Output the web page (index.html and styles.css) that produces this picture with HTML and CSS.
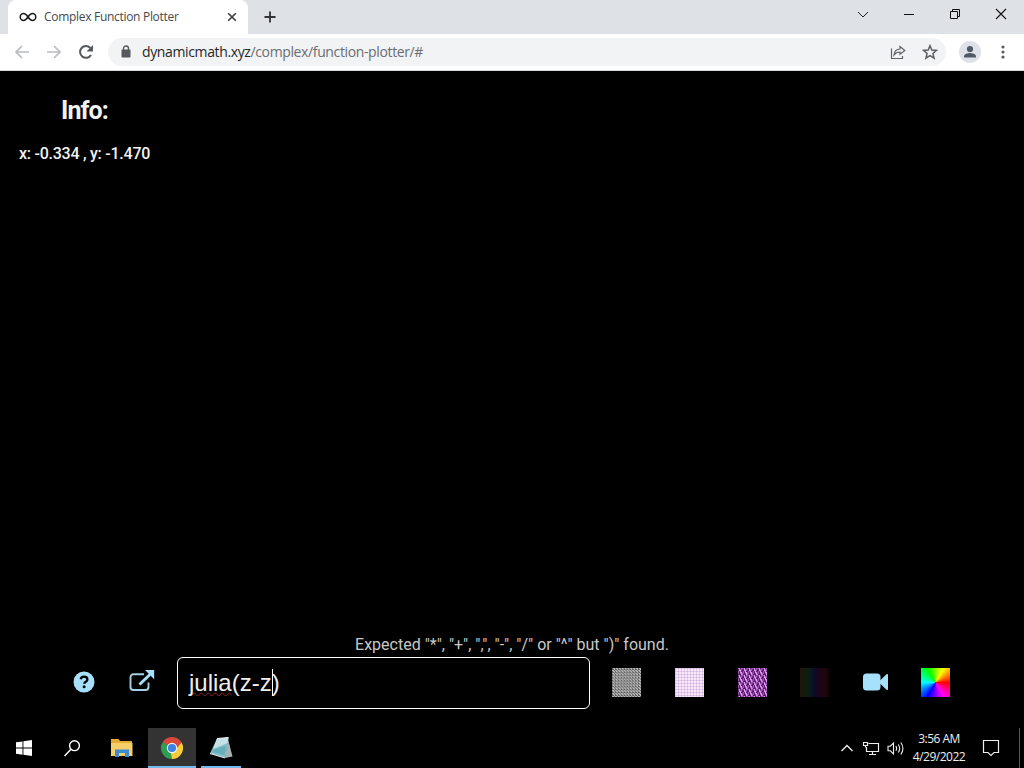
FILE: index.html
```
<!DOCTYPE html>
<html lang="en">
<head>
    <meta charset="UTF-8">
    <meta name="viewport" content="width=device-width, initial-scale=1.0">
    <title>Complex Function Plotter</title>
    <link rel="stylesheet" href="styles.css">
</head>
<body>
    <div class="screen">
        <header class="tab-strip">
            <div class="tab">
                <svg class="favicon" width="18" height="10" viewBox="0 0 18 10"><path d="M9 5C7.4 2.7 6.2 1.6 4.6 1.6a3.4 3.4 0 0 0 0 6.8C6.2 8.4 7.4 7.3 9 5s2.8-3.4 4.4-3.4a3.4 3.4 0 0 1 0 6.8C11.800 8.400 10.600 7.300 9 5z" fill="none" stroke="#1b1b1b" stroke-width="1.5"/></svg>
                <span class="tab-title">Complex Function Plotter</span>
                <svg class="tab-close" width="10" height="10" viewBox="0 0 10 10"><path d="M1.200 1.200l7.600 7.600M8.800 1.200l-7.600 7.600" stroke="#3c4043" stroke-width="1.6"/></svg>
            </div>
            <svg class="new-tab" width="14" height="14" viewBox="0 0 14 14"><path d="M7 1.500v11M1.500 7h11" stroke="#303236" stroke-width="1.8"/></svg>
            <div class="window-buttons">
                <svg width="46" height="30" viewBox="0 0 46 30"><path d="M18 12l5 5 5-5" fill="none" stroke="#222"/></svg>
                <svg width="46" height="30" viewBox="0 0 46 30"><path d="M18 14.500h10" stroke="#111"/></svg>
                <svg width="46" height="30" viewBox="0 0 46 30"><path d="M18.500 11.500h7v7h-7zM20.500 11.500v-2h7v7h-2" fill="none" stroke="#111"/></svg>
                <svg width="46" height="30" viewBox="0 0 46 30"><path d="M18 9l10 10M28 9L18 19" stroke="#111" stroke-width="1.1"/></svg>
            </div>
        </header>

        <nav class="toolbar">
            <svg width="16" height="16" viewBox="0 0 16 16"><path d="M15 8H2M8 2L2 8l6 6" fill="none" stroke="#b9bbbe" stroke-width="1.7"/></svg>
            <svg width="16" height="16" viewBox="0 0 16 16"><path d="M1 8h13M8 2l6 6-6 6" fill="none" stroke="#b9bbbe" stroke-width="1.7"/></svg>
            <svg width="16" height="16" viewBox="0 0 16 16"><path d="M13 11a5.900 5.900 0 1 1-.7-7.100L14 5.500" fill="none" stroke="#55585c" stroke-width="2"/><path d="M15 1v6.500H8.500z" fill="#55585c"/></svg>
            <div class="address-bar">
                <svg class="lock" width="10" height="13" viewBox="0 0 10 13"><path d="M2.500 6V3.500a2.500 2.500 0 0 1 5 0V6" fill="none" stroke="#55585c" stroke-width="1.400"/><rect x="0.500" y="4.600" width="9" height="7.800" rx="1" fill="#55585c"/></svg>
                <span class="url"><b>dynamicmath.xyz</b>/complex/function-plotter/#</span>
                <svg class="share" width="16" height="16" viewBox="0 0 16 16"><path d="M1.500 4.500v10h11V12M4 11c.4-4 2.500-5.800 6-6V2.500L14.800 6.500 10 10.200V8C7.200 8 5.500 8.900 4 11z" fill="none" stroke="#5f6368" stroke-width="1.200"/></svg>
                <svg width="16" height="16" viewBox="0 0 16 16"><path d="M8 1.700l1.850 4.300 4.650.4-3.550 3.100 1.100 4.600L8 11.650 3.950 14.100l1.100-4.600L1.500 6.400l4.650-.4z" fill="none" stroke="#5a5d61" stroke-width="1.500"/></svg>
            </div>
            <svg class="profile" width="22" height="22" viewBox="0 0 22 22"><circle cx="11" cy="11" r="11" fill="#dee2e8"/><circle cx="11" cy="8" r="3.100" fill="#505a66"/><path d="M5 16.500v-1.300c0-2.200 4-3.200 6-3.200s6 1 6 3.200v1.300z" fill="#505a66"/></svg>
            <svg class="menu" width="4" height="16" viewBox="0 0 4 16"><g fill="#5a5d61"><circle cx="2" cy="3" r="1.600"/><circle cx="2" cy="8" r="1.600"/><circle cx="2" cy="13" r="1.600"/></g></svg>
        </nav>

        <main class="plotter">
            <section class="info">
                <h1>Info:</h1>
                <p>x: -0.334 , y: -1.470</p>
            </section>
            <p class="message">Expected "*", "+", ",", "-", "/" or "^" but ")" found.</p>
            <div class="controls">
                <svg class="help" width="22" height="22" viewBox="0 0 22 22"><circle cx="11" cy="11" r="10.500" fill="#a6e0fb"/><path d="M7.700 8.300C8 6.500 9.300 5.700 11 5.700c2 0 3.400 1.200 3.400 2.700 0 2.300-3.200 2.300-3.200 4.400" fill="none" stroke="#000" stroke-width="2.300"/><circle cx="11.100" cy="15.800" r="1.500"/></svg>
                <svg class="open" width="26" height="24" viewBox="0 0 26 24"><path d="M15 5.300H4.500a3 3 0 0 0-3 3V18a3 3 0 0 0 3 3h12a3 3 0 0 0 3-3v-4.500" fill="none" stroke="#a6cfe4" stroke-width="1.900"/><path d="M10.500 15.500L21.500 5" stroke="#a6e0fb" stroke-width="3"/><path d="M16 1h9.200v9.200z" fill="#a6e0fb"/></svg>
                <div class="equation"><span class="misspelled">julia</span>(z-z<i class="caret"></i>)</div>
                <span class="swatch checker"></span>
                <span class="swatch grid"></span>
                <span class="swatch scales"></span>
                <span class="swatch bands"></span>
                <svg class="camera" width="26" height="20" viewBox="0 0 26 20"><rect x="0" y="1.500" width="17.500" height="17" rx="3.500" fill="#a6e0fb"/><path d="M17 8.500l6.500-6.300q1.500-.8 1.500.8v14q0 1.600-1.500.8L17 11.500z" fill="#a6e0fb"/></svg>
                <span class="swatch wheel"></span>
            </div>
        </main>

        <footer class="taskbar">
            <div class="task"><svg width="16" height="16" viewBox="0 0 16 16"><path d="M0 2.300L6.500 1.400v6.200H0zM7.400 1.200L16 0v7.600H7.400zM0 8.500h6.500v6.200L0 13.800zM7.400 8.500H16V16l-8.600-1.200z" fill="#fff"/></svg></div>
            <div class="task"><svg width="16" height="17" viewBox="0 0 16 17"><circle cx="10.500" cy="5.700" r="4.900" fill="none" stroke="#fff" stroke-width="1.400"/><path d="M7 9.300L.5 16" stroke="#fff" stroke-width="1.500"/></svg></div>
            <div class="task explorer"><svg width="22" height="18" viewBox="0 0 22 18"><path d="M0 0h7.500l1.500 2h12v15H0z" fill="#e6ac2f"/><path d="M0 4h21.500v13H0z" fill="#f5cf67"/><path d="M4 18v-7.500h14V18h-4v-4H8v4z" fill="#3c8cd0"/></svg></div>
            <div class="task running active"><svg width="22" height="22" viewBox="0 0 22 22"><path d="M11 11L1.470 5.500A11 11 0 0 1 20.530 5.500z" fill="#d7483b"/><path d="M11 11L1.470 5.500A11 11 0 0 0 11 22z" fill="#2f9e54"/><path d="M11 11L11 22A11 11 0 0 0 20.530 5.500z" fill="#f8cd3b"/><path d="M11 5.500h9.530L16 11z" fill="#d7483b"/><path d="M1.470 5.500L6.300 13.700 8 9z" fill="#2f9e54"/><path d="M15.700 13.700L11 22l-1-6z" fill="#f8cd3b"/><circle cx="11" cy="11" r="5.200" fill="#f4f4f4"/><circle cx="11" cy="11" r="4.100" fill="#3e82e4"/></svg></div>
            <div class="task running notepad"><svg width="24" height="24" viewBox="0 0 24 24"><path d="M19 3l4.500 17.500L16 22z" fill="#a9b3b0"/><path d="M8 2.500L19.500 1.500 16.500 22 1 17.500z" fill="#7fbfca"/><path d="M8 2.500L19.500 1.500 18.700 7 4 13z" fill="#c5e3e7"/><path d="M4 14l13-4-1.500 9-12-3z" fill="#4f9dab" opacity=".5"/><path d="M8 2.500l11.500-1M1 17.500L16 22" stroke="#e7efec"/></svg></div>
            <div class="tray">
                <svg width="14" height="10" viewBox="0 0 14 10"><path d="M1.500 8L7 2.500 12.500 8" fill="none" stroke="#eee" stroke-width="1.400"/></svg>
                <svg class="network" width="17" height="15" viewBox="0 0 17 15"><path d="M5.500 2.500h10v8H3.500V6M9.500 10.500v3M6 13.500h7M.5 1.500h4v3h-4zM2.500 4.500v2" fill="none" stroke="#eee" stroke-width="1.200"/></svg>
                <svg class="volume" width="18" height="15" viewBox="0 0 18 15"><path d="M1 5.200h2.300L6.500 2v11L3.300 9.800H1zM8.800 5.200q1.800 2.300 0 4.600M11.200 3.500q3 4 0 8M13.800 1.500q4.300 6 0 12" fill="none" stroke="#eee" stroke-width="1.100"/></svg>
                <div class="clock"><span class="time">3:56 AM</span><span>4/29/2022</span></div>
                <svg class="notice" width="18" height="18" viewBox="0 0 18 18"><path d="M1.500 1.500h15v12H12l-3 3-3-3H1.500z" fill="none" stroke="#eee" stroke-width="1.200"/></svg>
                <span class="show-desktop"></span>
            </div>
        </footer>
    </div>
</body>
</html>
```
FILE: styles.css
```
* {
    box-sizing: border-box;
}
body {
    margin: 0;
    background: #000;
    font-family: "Open Sans", "Noto Sans", sans-serif;
}
svg {
    display: block;
    flex: none;
}
.screen {
    display: flex;
    flex-direction: column;
    width: 1024px;
    height: 768px;
    overflow: hidden;
}

/* browser window */
.tab-strip {
    display: flex;
    height: 34px;
    padding-left: 8px;
    background: #dee1e6;
}
.tab {
    display: flex;
    align-items: center;
    width: 240px;
    height: 34px;
    padding: 0 11px;
    border-radius: 8px 8px 0 0;
    background: #fff;
}
.tab-title {
    flex: 1;
    margin-left: 7px;
    color: #45484c;
    font-size: 12px;
    letter-spacing: -0.3px;
    line-height: 16px;
    padding-bottom: 1px;
    white-space: nowrap;
}
.new-tab {
    margin: 10px 0 0 15px;
}
.window-buttons {
    display: flex;
    margin-left: auto;
}
.toolbar {
    display: flex;
    align-items: center;
    gap: 16px;
    height: 37px;
    padding: 0 20px 1px 14px;
    border-bottom: 1px solid #d5d7da;
    background: #fff;
}
.address-bar {
    display: flex;
    flex: 1;
    align-items: center;
    height: 28px;
    margin-left: -2px;
    padding: 0 8px 0 13px;
    border-radius: 14px;
    background: #f1f3f4;
}
.url {
    flex: 1;
    margin-left: 11px;
    color: #6b6e72;
    font-size: 14px;
    letter-spacing: -0.37px;
}
.url b {
    color: #25272a;
    font-weight: 400;
}
.share {
    margin-right: 16px;
}
.profile {
    margin-left: -3px;
}
.menu {
    margin: 0 -1px 0 4px;
}

/* plot area */
.plotter {
    display: flex;
    flex: 1;
    flex-direction: column;
    color: #f2f2f2;
    font-family: Roboto, sans-serif;
}
.info h1 {
    margin: 25px 0 0 61px;
    font-size: 25px;
    font-weight: 700;
    letter-spacing: -0.9px;
    line-height: 30px;
}
.info p {
    margin: 18px 0 0 19px;
    font-size: 16px;
    font-weight: 500;
    letter-spacing: -0.25px;
    line-height: 20px;
}
.message {
    margin: auto 0 2px;
    color: #c8c8c8;
    font-size: 16px;
    line-height: 20px;
    text-align: center;
}
.controls {
    display: flex;
    align-items: center;
    height: 52px;
    margin-bottom: 19px;
    padding-left: 73px;
}
.help,
.camera {
    margin-bottom: 2px;
}
.open {
    margin: -4px 22px 0 34px;
}
.equation {
    display: flex;
    align-items: center;
    width: 413px;
    height: 52px;
    margin-right: 22px;
    padding: 0 10px 1px 11px;
    border: 1px solid #fff;
    border-radius: 6px;
    color: #eee;
    font: 24px/30px "Liberation Sans", Arial, sans-serif;
}
.misspelled {
    text-decoration: underline wavy #8c2025 1px;
    text-decoration-skip-ink: none;
    text-underline-offset: 1px;
}
.caret {
    width: 1px;
    height: 27px;
    margin-right: -1px;
    background: #fff;
}
.swatch {
    flex: none;
    width: 29px;
    height: 29px;
    margin: 0 34px 1px 0;
}
.checker {
    background: repeating-conic-gradient(#bdbdbd 0 25%, #555 0 50%) 0 0 / 2.9px 2.9px;
}
.grid {
    background:
        repeating-linear-gradient(90deg, #b688ca55 0 1px, transparent 1px 3px),
        repeating-linear-gradient(#b688ca55 0 1px, transparent 1px 3px),
        #f8e9fa;
}
.scales {
    margin-right: 33px;
    background:
        linear-gradient(68deg, transparent 38%, #d79ae3 42% 58%, transparent 62%) 0 0 / 5px 7px,
        linear-gradient(112deg, transparent 38%, #a04cb6 42% 58%, transparent 62%) 2px 3px / 5px 7px,
        #581a6c;
}
.bands {
    background: linear-gradient(90deg, #20140b, #101e0b 20%, #071e17 33%, #0a0c2d 48%, #19051c 62%, #20050e 85%, #130308);
}
.camera {
    margin-right: 32px;
}
.wheel {
    background: conic-gradient(from 90deg, #f00, #f0f, #00f, #0ff, #0f0, #ff0, #f00);
}

/* taskbar */
.taskbar {
    display: flex;
    height: 40px;
    background: #000;
}
.task {
    display: flex;
    align-items: center;
    justify-content: center;
    width: 48px;
    height: 40px;
}
.task.explorer {
    width: 52px;
    padding-right: 1px;
}
.running {
    border-bottom: 2px solid #76b9ed;
}
.running svg {
    margin-top: 2px;
}
.active {
    background: #333;
}
.task.running.notepad {
    width: 40px;
    margin-left: 5px;
}
.tray {
    display: flex;
    align-items: center;
    margin-left: auto;
    color: #eee;
}
.network {
    margin-left: 9px;
}
.volume {
    margin-left: 7px;
}
.clock {
    display: flex;
    flex-direction: column;
    align-items: center;
    width: 68px;
    margin-right: 9px;
    font-size: 12px;
    letter-spacing: -0.5px;
    line-height: 18px;
    white-space: nowrap;
}
.show-desktop {
    width: 5px;
    height: 40px;
    margin-left: 19px;
    border-left: 1px solid #555;
}
```
